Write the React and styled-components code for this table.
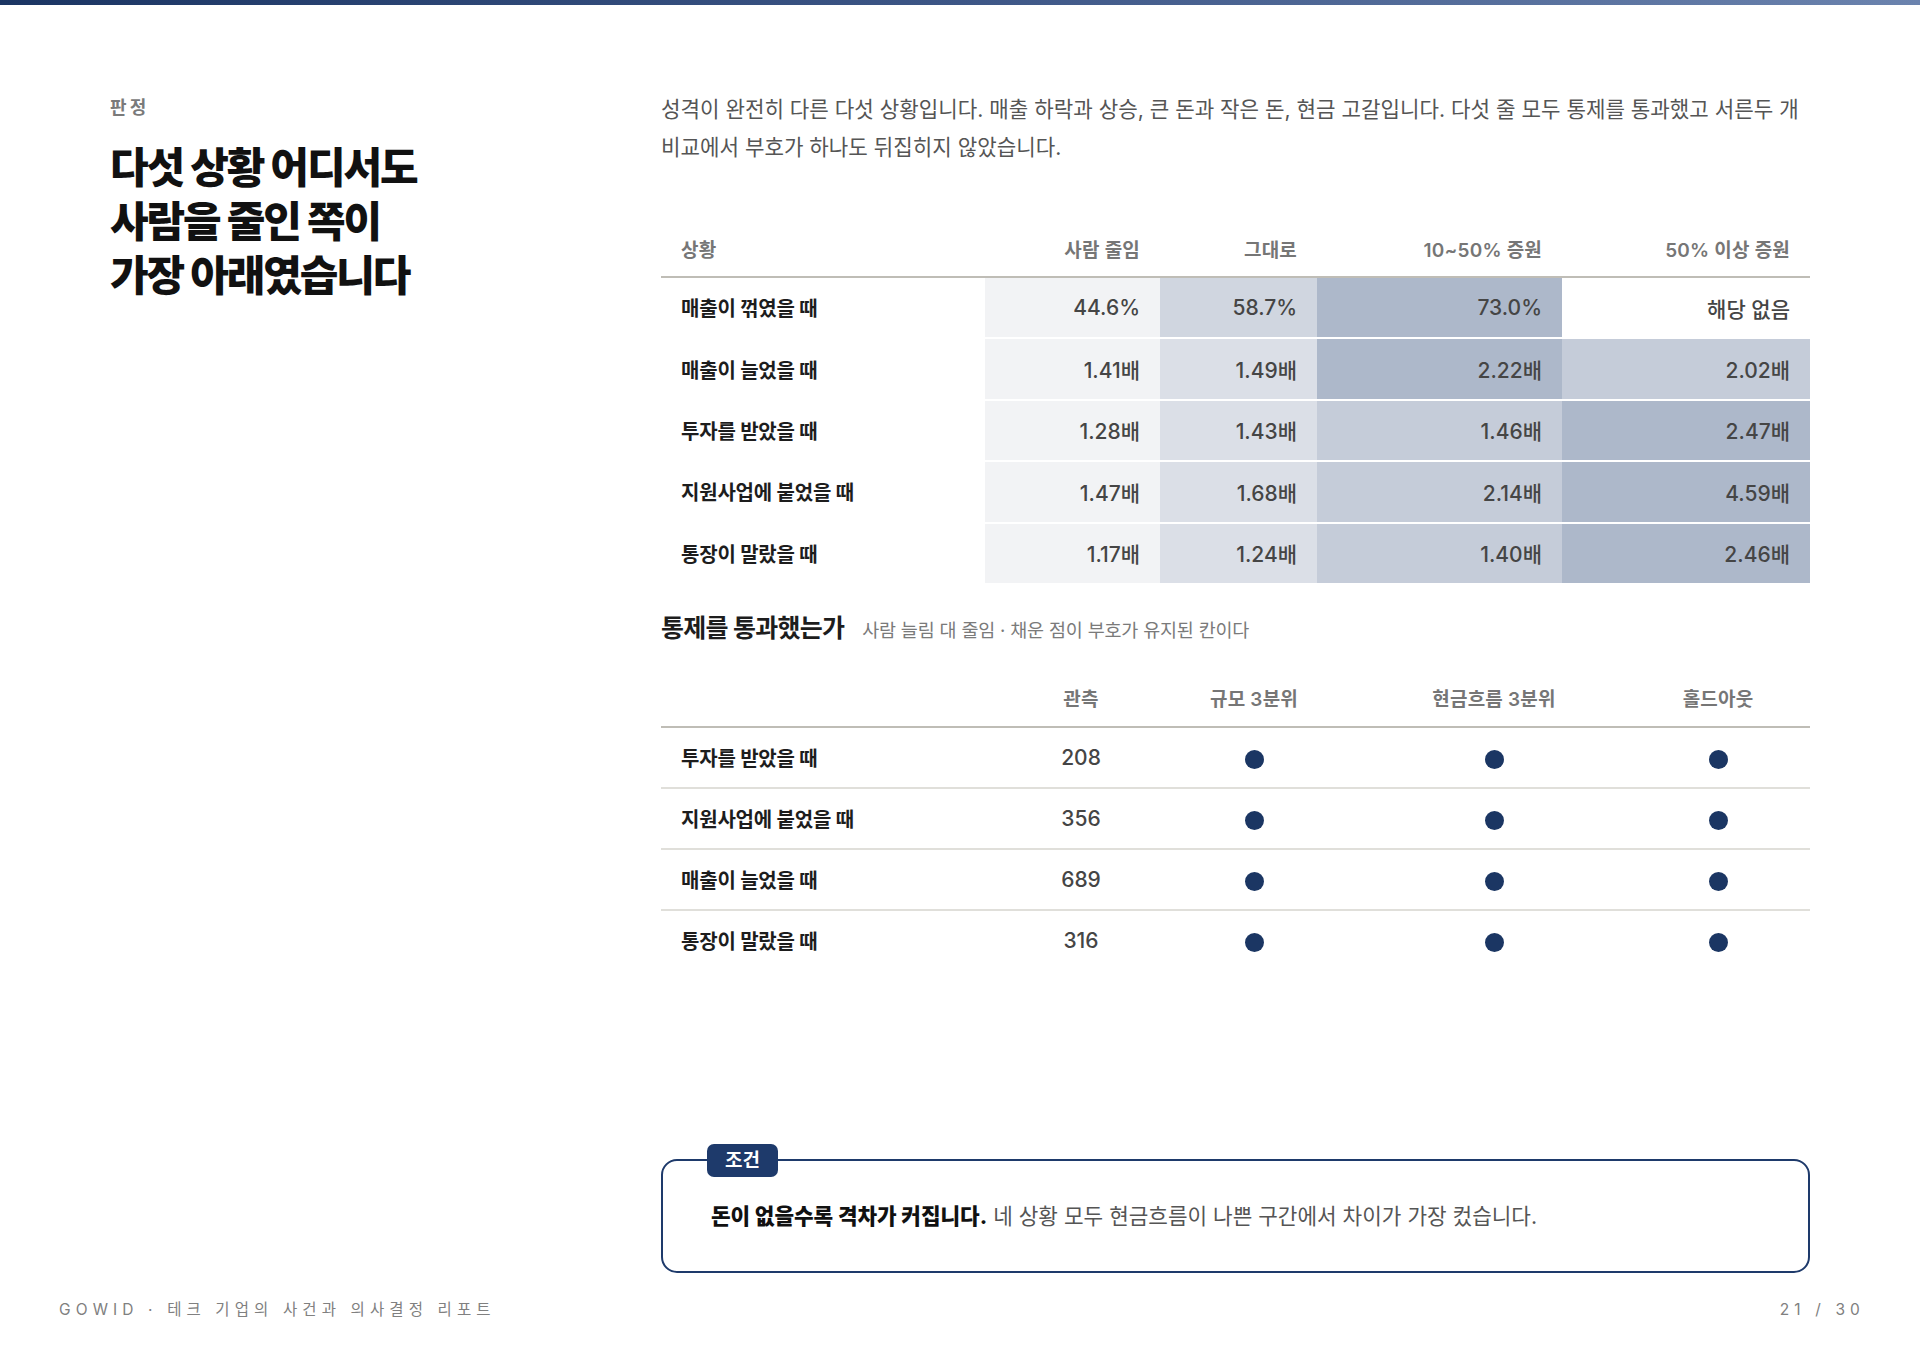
import React from "react";
import styled, { createGlobalStyle } from "styled-components";

const Global = createGlobalStyle`
  html, body { margin: 0; padding: 0; background: #fff; }
  body {
    font-family: Inter, "Noto Sans CJK KR", "Noto Sans", sans-serif;
    color: #222;
    -webkit-font-smoothing: antialiased;
  }
  * { box-sizing: border-box; }
`;

const Page = styled.div`
  min-height: 100vh;
  display: flex;
  flex-direction: column;
`;

const TopBar = styled.div`
  height: 5px;
  background: linear-gradient(90deg, #1b3563 0%, #3d5686 50%, #6b83ae 100%);
`;

const Main = styled.main`
  flex: 1;
  display: grid;
  grid-template-columns: 471px 1fr;
  column-gap: 80px;
  padding: 85px 110px 27px;
`;

const Left = styled.section`
  display: flex;
  flex-direction: column;
`;

const Eyebrow = styled.div`
  font-size: 18px;
  font-weight: 700;
  color: #7a7a7a;
  letter-spacing: 0.18em;
  line-height: 36px;
`;

const Title = styled.h1`
  margin: 15px 0 0;
  font-size: 42px;
  font-weight: 800;
  line-height: 54px;
  letter-spacing: -0.05em;
  color: #111;
`;

const Right = styled.section`
  display: flex;
  flex-direction: column;
`;

const Lead = styled.p`
  margin: 0;
  font-size: 21.2px;
  line-height: 38px;
  color: #555;
`;

const Table = styled.table`
  width: 100%;
  border-collapse: collapse;
  table-layout: fixed;
  margin-top: ${(p) => p.$mt}px;
`;

const Col = styled.col`
  width: ${(p) => p.$w}px;
`;

const Th = styled.th`
  height: 57px;
  padding: 0 20px;
  font-size: 19px;
  font-weight: 600;
  color: #767676;
  text-align: ${(p) => p.$align || "right"};
  border-bottom: 2px solid #bfbdb6;
  letter-spacing: 0.01em;
`;

const RowLabel = styled.td`
  height: ${(p) => p.$h || 61.4}px;
  padding: 0 20px;
  font-size: 20px;
  font-weight: 700;
  color: #1d1d1d;
  letter-spacing: -0.01em;
  border-bottom: 2px solid ${(p) => p.$line || "#fff"};
`;

const shades = {
  0: "#f2f3f5",
  1: "#dbdfe7",
  1.5: "#d0d6e0",
  2: "#c5ccd9",
  3: "#adb8ca",
  none: "#ffffff",
};

const HeatCell = styled.td`
  height: 61.4px;
  padding: 0 20px;
  text-align: right;
  font-size: 21px;
  font-weight: 500;
  color: #454545;
  background: ${(p) => shades[p.$level]};
  border-bottom: 2px solid #fff;
`;

const SectionHead = styled.div`
  display: flex;
  align-items: baseline;
  gap: 18px;
  margin-top: 27px;
`;

const SectionTitle = styled.h2`
  margin: 0;
  font-size: 25px;
  font-weight: 700;
  line-height: 32px;
  color: #1d1d1d;
  letter-spacing: -0.03em;
`;

const SectionNote = styled.span`
  font-size: 18.5px;
  color: #7a7a7a;
  letter-spacing: -0.01em;
`;

const CenterCell = styled.td`
  height: 61px;
  text-align: center;
  font-size: 21px;
  font-weight: 500;
  color: #454545;
  border-bottom: 2px solid ${(p) => p.$line};
`;

const Dot = styled.span`
  display: inline-block;
  width: 19px;
  height: 19px;
  border-radius: 50%;
  background: #1b3663;
  vertical-align: middle;
`;

const Callout = styled.div`
  position: relative;
  margin-top: auto;
  border: 2px solid #1e3a6b;
  border-radius: 16px;
  padding: 40px 48px 40px;
  font-size: 21.3px;
  line-height: 30px;
  color: #555;
`;

const Badge = styled.span`
  position: absolute;
  top: -17px;
  left: 44px;
  height: 33px;
  padding: 0 18px;
  display: flex;
  align-items: center;
  background: #1e3a6b;
  color: #fff;
  font-size: 19px;
  font-weight: 700;
  border-radius: 7px;
`;

const Strong = styled.strong`
  font-weight: 800;
  color: #111;
`;

const Footer = styled.footer`
  display: flex;
  justify-content: space-between;
  align-items: center;
  padding: 0 55px 37px 59px;
  font-size: 15.5px;
  line-height: 20px;
  letter-spacing: 0.33em;
  color: #808080;
`;

const heatRows = [
  {
    label: "매출이 꺾였을 때",
    cells: [
      ["44.6%", 0],
      ["58.7%", 1.5],
      ["73.0%", 3],
      ["해당 없음", "none"],
    ],
  },
  {
    label: "매출이 늘었을 때",
    cells: [
      ["1.41배", 0],
      ["1.49배", 1],
      ["2.22배", 3],
      ["2.02배", 2],
    ],
  },
  {
    label: "투자를 받았을 때",
    cells: [
      ["1.28배", 0],
      ["1.43배", 1],
      ["1.46배", 2],
      ["2.47배", 3],
    ],
  },
  {
    label: "지원사업에 붙었을 때",
    cells: [
      ["1.47배", 0],
      ["1.68배", 1],
      ["2.14배", 2],
      ["4.59배", 3],
    ],
  },
  {
    label: "통장이 말랐을 때",
    cells: [
      ["1.17배", 0],
      ["1.24배", 1],
      ["1.40배", 2],
      ["2.46배", 3],
    ],
  },
];

const controlRows = [
  { label: "투자를 받았을 때", n: 208 },
  { label: "지원사업에 붙었을 때", n: 356 },
  { label: "매출이 늘었을 때", n: 689 },
  { label: "통장이 말랐을 때", n: 316 },
];

export default function App() {
  return (
    <Page>
      <Global />
      <TopBar />
      <Main>
        <Left>
          <Eyebrow>판정</Eyebrow>
          <Title>
            다섯 상황 어디서도
            <br />
            사람을 줄인 쪽이
            <br />
            가장 아래였습니다
          </Title>
        </Left>
        <Right>
          <Lead>
            성격이 완전히 다른 다섯 상황입니다. 매출 하락과 상승, 큰 돈과 작은 돈, 현금 고갈입니다. 다섯 줄 모두
            통제를 통과했고 서른두 개 비교에서 부호가 하나도 뒤집히지 않았습니다.
          </Lead>

          <Table $mt={54}>
            <colgroup>
              <Col $w={324} />
              <Col $w={175} />
              <Col $w={157} />
              <Col $w={245} />
              <Col $w={248} />
            </colgroup>
            <thead>
              <tr>
                <Th $align="left">상황</Th>
                <Th>사람 줄임</Th>
                <Th>그대로</Th>
                <Th>10~50% 증원</Th>
                <Th>50% 이상 증원</Th>
              </tr>
            </thead>
            <tbody>
              {heatRows.map((r) => (
                <tr key={r.label}>
                  <RowLabel>{r.label}</RowLabel>
                  {r.cells.map(([v, l], i) => (
                    <HeatCell key={i} $level={l}>
                      {v}
                    </HeatCell>
                  ))}
                </tr>
              ))}
            </tbody>
          </Table>

          <SectionHead>
            <SectionTitle>통제를 통과했는가</SectionTitle>
            <SectionNote>사람 늘림 대 줄임 · 채운 점이 부호가 유지된 칸이다</SectionNote>
          </SectionHead>

          <Table $mt={26}>
            <colgroup>
              <Col $w={355} />
              <Col $w={130} />
              <Col $w={216} />
              <Col $w={264} />
              <Col $w={184} />
            </colgroup>
            <thead>
              <tr>
                <Th $align="left"></Th>
                <Th $align="center">관측</Th>
                <Th $align="center">규모 3분위</Th>
                <Th $align="center">현금흐름 3분위</Th>
                <Th $align="center">홀드아웃</Th>
              </tr>
            </thead>
            <tbody>
              {controlRows.map((r, idx) => {
                const line = idx === controlRows.length - 1 ? "transparent" : "#e0dfda";
                return (
                  <tr key={r.label}>
                    <RowLabel $h={61} $line={line}>
                      {r.label}
                    </RowLabel>
                    <CenterCell $line={line}>{r.n}</CenterCell>
                    <CenterCell $line={line}>
                      <Dot />
                    </CenterCell>
                    <CenterCell $line={line}>
                      <Dot />
                    </CenterCell>
                    <CenterCell $line={line}>
                      <Dot />
                    </CenterCell>
                  </tr>
                );
              })}
            </tbody>
          </Table>

          <Callout>
            <Badge>조건</Badge>
            <Strong>돈이 없을수록 격차가 커집니다.</Strong> 네 상황 모두 현금흐름이 나쁜 구간에서 차이가 가장
            컸습니다.
          </Callout>
        </Right>
      </Main>
      <Footer>
        <span>GOWID · 테크 기업의 사건과 의사결정 리포트</span>
        <span>21 / 30</span>
      </Footer>
    </Page>
  );
}
